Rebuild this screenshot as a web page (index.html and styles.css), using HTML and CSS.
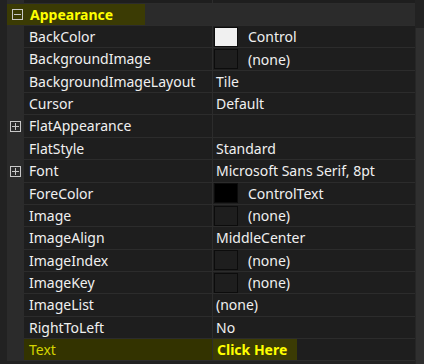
FILE: index.html
```html
<!DOCTYPE html>
<html lang="en">
<head>
    <meta charset="UTF-8">
    <title>Properties</title>
    <link rel="stylesheet" href="styles.css">
</head>
<body>
    <div class="panel">
        <div class="grid">
            <div class="row top"><div class="margin"></div><div class="name"></div><div class="value"></div></div>
            <div class="category">
                <div class="cat-label">
                    <span class="toggle minus"></span>
                    <span class="cat-text">Appearance</span>
                </div>
            </div>
            <div class="row"><div class="margin"></div><div class="name">BackColor</div><div class="value"><span class="swatch white"></span><span class="after">Control</span></div></div>
            <div class="row"><div class="margin"></div><div class="name">BackgroundImage</div><div class="value"><span class="swatch"></span><span class="after">(none)</span></div></div>
            <div class="row"><div class="margin"></div><div class="name">BackgroundImageLayout</div><div class="value">Tile</div></div>
            <div class="row"><div class="margin"></div><div class="name">Cursor</div><div class="value">Default</div></div>
            <div class="row"><div class="margin"><span class="toggle plus"></span></div><div class="name">FlatAppearance</div><div class="value"></div></div>
            <div class="row"><div class="margin"></div><div class="name">FlatStyle</div><div class="value">Standard</div></div>
            <div class="row"><div class="margin"><span class="toggle plus"></span></div><div class="name">Font</div><div class="value">Microsoft Sans Serif, 8pt</div></div>
            <div class="row"><div class="margin"></div><div class="name">ForeColor</div><div class="value"><span class="swatch black"></span><span class="after">ControlText</span></div></div>
            <div class="row"><div class="margin"></div><div class="name">Image</div><div class="value"><span class="swatch"></span><span class="after">(none)</span></div></div>
            <div class="row"><div class="margin"></div><div class="name">ImageAlign</div><div class="value">MiddleCenter</div></div>
            <div class="row"><div class="margin"></div><div class="name">ImageIndex</div><div class="value"><span class="swatch"></span><span class="after">(none)</span></div></div>
            <div class="row"><div class="margin"></div><div class="name">ImageKey</div><div class="value"><span class="swatch"></span><span class="after">(none)</span></div></div>
            <div class="row"><div class="margin"></div><div class="name">ImageList</div><div class="value">(none)</div></div>
            <div class="row"><div class="margin"></div><div class="name">RightToLeft</div><div class="value">No</div></div>
            <div class="row marked"><div class="margin"></div><div class="name">Text</div><div class="value"><span class="hot">Click Here</span></div></div>
        </div>
        <div class="scrollbar"><div class="thumb"></div></div>
    </div>
</body>
</html>
```

FILE: styles.css
```css
body {
    margin: 0;
    background-color: #222222;
    font-family: 'Noto Sans', sans-serif;
    font-size: 14px;
    color: #f0f0f0;
    overflow: hidden;
}
.panel {
    display: flex;
    height: 364px;
    padding-left: 7px;
    overflow: hidden;
}
.grid {
    width: 408px;
    display: flex;
    flex-direction: column;
    overflow: hidden;
}
.row {
    display: flex;
    height: 22.36px;
    flex-shrink: 0;
}
.row.top {
    height: 3.6px;
}
.margin {
    width: 17px;
    background-color: #2b2b2b;
    display: flex;
    align-items: center;
    justify-content: center;
    flex-shrink: 0;
}
.name {
    width: 183px;
    padding-left: 5px;
    background-color: #1e1e1e;
    border-bottom: 1px solid #2c2c2c;
    line-height: 21px;
    white-space: nowrap;
    flex-shrink: 0;
}
.value {
    flex: 1;
    display: flex;
    align-items: center;
    padding-left: 3px;
    background-color: #1e1e1e;
    border-left: 1px solid #2c2c2c;
    border-bottom: 1px solid #2c2c2c;
    white-space: nowrap;
}
.category {
    height: 22.4px;
    flex-shrink: 0;
    background-color: #2b2b2b;
    border-bottom: 1px solid #2c2c2c;
    box-sizing: border-box;
}
.cat-label {
    display: flex;
    align-items: center;
    width: 138px;
    height: 21px;
    background-color: #3b3b04;
}
.cat-text {
    color: #ffff00;
    font-weight: bold;
    margin-left: 7px;
}
.toggle {
    position: relative;
    display: inline-block;
    width: 9px;
    height: 9px;
    border: 1px solid #c8c8c8;
}
.category .toggle {
    margin-left: 5px;
}
.toggle::before {
    content: "";
    position: absolute;
    left: 1px;
    right: 1px;
    top: 4px;
    height: 1px;
    background-color: #c8c8c8;
}
.toggle.plus::after {
    content: "";
    position: absolute;
    top: 1px;
    bottom: 1px;
    left: 4px;
    width: 1px;
    background-color: #c8c8c8;
}
.swatch {
    width: 22px;
    height: 18px;
    margin-left: -2px;
    border: 1px solid #0c0c0c;
    background-color: #1e1e1e;
    flex-shrink: 0;
}
.swatch.white {
    background-color: #f0f0f0;
}
.swatch.black {
    background-color: #000000;
}
.after {
    margin-left: 10px;
}
.marked .name {
    background-color: #333300;
    color: #d4d400;
}
.marked .value {
    padding-left: 0;
}
.hot {
    display: flex;
    align-items: center;
    height: 100%;
    padding: 0 10px 0 4px;
    background-color: #3b3b04;
    color: #ffff00;
    font-weight: bold;
}
.scrollbar {
    width: 9px;
    padding-top: 28px;
    display: flex;
    justify-content: flex-end;
}
.thumb {
    width: 8px;
    flex: 1;
    background-color: #2f2f2f;
    border-left: 1px solid #262626;
}
```
